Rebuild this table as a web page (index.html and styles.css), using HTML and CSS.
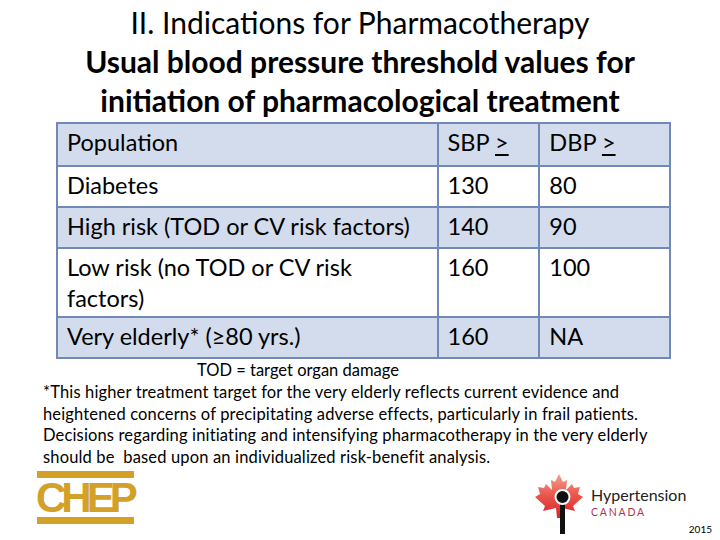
FILE: index.html
```html
<!DOCTYPE html>
<html>
<head>
<meta charset="utf-8">
<link rel="stylesheet" href="styles.css">
</head>
<body>
<div class="slide">
  <header class="title">
    <div class="t1">II. Indications for Pharmacotherapy</div>
    <div class="t2">Usual blood pressure threshold values for</div>
    <div class="t2">initiation of pharmacological treatment</div>
  </header>
  <table class="bp">
    <colgroup><col class="c1"><col class="c2"><col class="c3"></colgroup>
    <tr class="shade h43"><td>Population</td><td>SBP <u>&gt;</u></td><td>DBP <u>&gt;</u></td></tr>
    <tr class="h41"><td>Diabetes</td><td>130</td><td>80</td></tr>
    <tr class="shade h41"><td>High risk (TOD or CV risk factors)</td><td>140</td><td>90</td></tr>
    <tr class="h69"><td>Low risk (no TOD or CV risk factors)</td><td>160</td><td>100</td></tr>
    <tr class="shade h41"><td>Very elderly* (≥80 yrs.)</td><td>160</td><td>NA</td></tr>
  </table>
  <div class="tod">TOD = target organ damage</div>
  <p class="note">*This higher treatment target for the very elderly reflects current evidence and<br>heightened concerns of precipitating adverse effects, particularly in frail patients.<br>Decisions regarding initiating and intensifying pharmacotherapy in the very elderly<br>should be&nbsp; based upon an individualized risk-benefit analysis.</p>
  <footer class="logos">
    <div class="chep">
      <div class="bar"></div>
      <div class="chep-text">CHEP</div>
      <div class="bar"></div>
    </div>
    <div class="htn">
      <svg class="leaf" width="50" height="60" viewBox="0 0 50 60">
        <defs>
          <linearGradient id="lg" x1="0" y1="0" x2="0" y2="1">
            <stop offset="0" stop-color="#f4a08e"/>
            <stop offset="0.5" stop-color="#e9544a"/>
            <stop offset="1" stop-color="#d8262c"/>
          </linearGradient>
        </defs>
        <path fill="url(#lg)" d="M25 0 L29 8 L33 6 L32 16 L38 10 L40 14 L46 13 L44 20 L49 23 L39 32 L41 37 L28 34 L27 44 L23 44 L22 34 L9 37 L11 32 L1 23 L6 20 L4 13 L10 14 L12 10 L18 16 L17 6 L21 8 Z"/>
        <rect x="26" y="30" width="5" height="30" fill="#111"/>
        <circle cx="28.5" cy="23" r="7" fill="#111" stroke="#fff" stroke-width="2"/>
      </svg>
      <div class="htn-text">
        <div class="hyp">Hypertension</div>
        <div class="can">CANADA</div>
      </div>
      <div class="year">2015</div>
    </div>
  </footer>
</div>
</body>
</html>
```
FILE: styles.css
```css
html, body {
  margin: 0;
  padding: 0;
  background: #ffffff;
}
body {
  font-family: Lato, "Open Sans", sans-serif;
  color: #000;
}
.slide {
  width: 720px;
  height: 540px;
  position: relative;
  overflow: hidden;
}
.title {
  text-align: center;
  padding-top: 3px;
}
.t1 {
  font-size: 30px;
  line-height: 39px;
}
.t2 {
  font-size: 30px;
  font-weight: bold;
  line-height: 39px;
}
.bp {
  margin: 2px 0 0 56px;
  border-collapse: collapse;
  width: 615px;
  font-size: 23.5px;
}
.c1 { width: 382px; }
.c2 { width: 102px; }
.c3 { width: 131px; }
.bp td {
  border: 2px solid #7089b6;
  padding: 3px 8px 0 9px;
  vertical-align: top;
  line-height: 31px;
}
.bp tr.shade td { background: #d3dcec; }
.h43 { height: 43px; }
.h41 { height: 41px; }
.h69 { height: 69px; }
.bp u { text-decoration-thickness: 2px; text-underline-offset: 3px; }
.tod {
  margin: 0 0 0 197px;
  font-size: 16.5px;
  line-height: 22px;
}
.note {
  margin: 1px 0 0 43px;
  width: 660px;
  font-size: 16.5px;
  line-height: 21.7px;
  letter-spacing: 0.15px;
  white-space: nowrap;
}
.logos {
  position: absolute;
  left: 0;
  top: 468px;
  width: 720px;
  height: 72px;
}
.chep {
  position: absolute;
  left: 37px;
  top: 3px;
  width: 97px;
  display: flex;
  flex-direction: column;
  gap: 2px;
}
.bar {
  height: 7px;
  background: #d3a127;
}
.chep-text {
  font-family: "Liberation Sans", Arial, sans-serif;
  font-weight: bold;
  font-size: 42px;
  line-height: 35px;
  letter-spacing: -5px;
  color: #d3a127;
  height: 35px;
  margin-left: -1px;
}
.htn {
  position: absolute;
  left: 534px;
  top: 5px;
  width: 186px;
  height: 67px;
}
.leaf {
  position: absolute;
  left: 0;
  top: 1px;
}
.htn-text {
  position: absolute;
  left: 57px;
  top: 12px;
}
.hyp {
  font-family: Lato, sans-serif;
  font-size: 16px;
  line-height: 20px;
  color: #222;
}
.can {
  margin-top: 1px;
  font-family: Lato, sans-serif;
  font-size: 10.5px;
  line-height: 12px;
  letter-spacing: 1.8px;
  color: #b0344c;
}
.year {
  position: absolute;
  right: 8px;
  top: 50px;
  font-size: 10px;
  color: #000;
}
```
